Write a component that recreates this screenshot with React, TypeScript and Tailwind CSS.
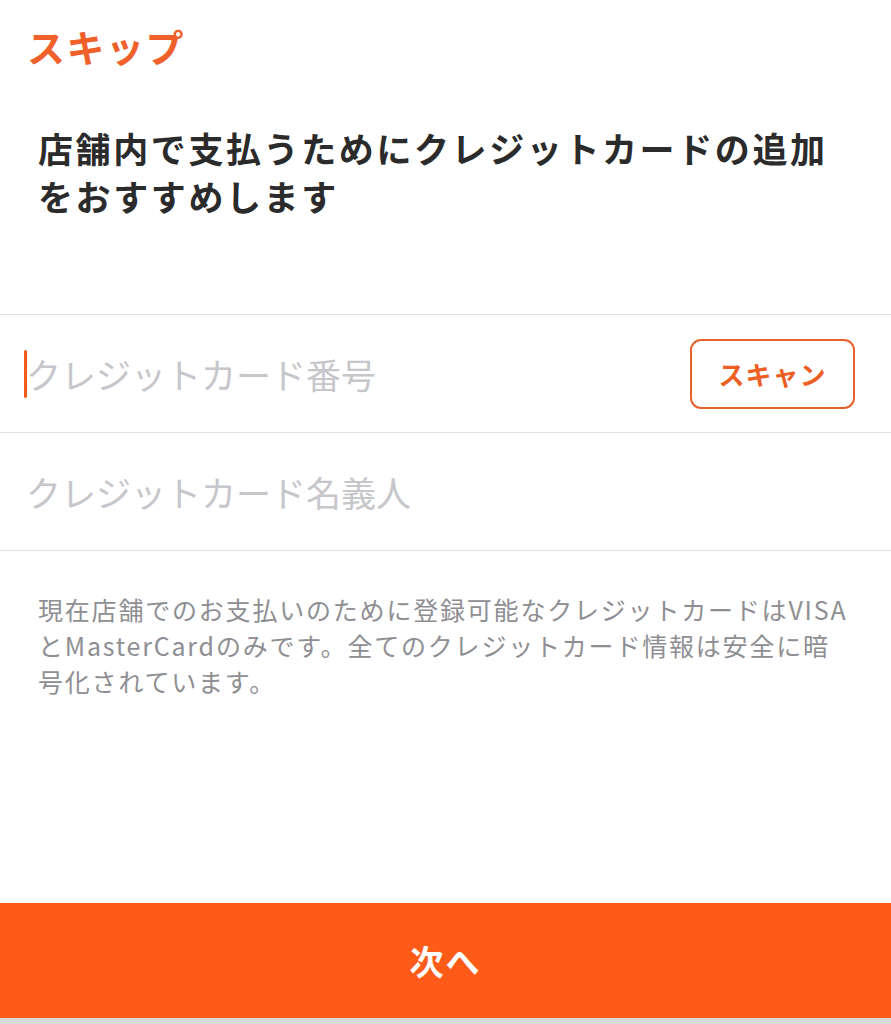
import { useState } from "react";

export default function App() {
  const [number, setNumber] = useState("");
  const [name, setName] = useState("");

  return (
    <div
      className="flex h-[1024px] w-[891px] flex-col bg-white"
      style={{ fontFamily: '"Noto Sans CJK JP", "Noto Sans", sans-serif' }}
    >
      <div className="pl-[27px] pt-[22px]">
        <button className="text-[38px] font-bold leading-[48px] tracking-[1.5px] text-[#f0602a]">スキップ</button>
      </div>

      <h1 className="mt-[54px] pl-[38px] pr-[40px] text-[35px] font-bold leading-[48px] tracking-[2.6px] text-[#2b2b2b]">
        店舗内で支払うためにクレジットカードの追加
        <br />
        をおすすめします
      </h1>

      <div className="mt-[94px] border-t border-[#e0e0e2]">
        <div className="flex h-[117px] items-center pr-[36px]">
          <div className="relative flex flex-1 items-center">
            <span className="absolute left-[24px] top-1/2 h-[48px] w-[3px] -translate-y-1/2 rounded-full bg-[#f85a1a]" />
            <input
              value={number}
              onChange={(e) => setNumber(e.target.value)}
              placeholder="クレジットカード番号"
              className="w-full bg-transparent pl-[26px] text-[35px] leading-[48px] text-[#2b2b2b] caret-transparent outline-none placeholder:text-[#c6c6cb]"
            />
          </div>
          <button className="flex h-[70px] w-[165px] items-center justify-center rounded-[11px] border-2 border-[#e8612c] text-[26px] font-bold tracking-[1px] text-[#ec5f25]">
            スキャン
          </button>
        </div>
        <div className="border-t border-[#e0e0e2]" />
        <div className="flex h-[117px] items-center">
          <input
            value={name}
            onChange={(e) => setName(e.target.value)}
            placeholder="クレジットカード名義人"
            className="w-full bg-transparent pl-[26px] text-[35px] leading-[48px] text-[#2b2b2b] outline-none placeholder:text-[#c6c6cb]"
          />
        </div>
        <div className="border-t border-[#e0e0e2]" />
      </div>

      <p className="mt-[40px] pl-[38px] pr-[40px] text-[25px] leading-[36px] tracking-[1.8px] text-[#8e8e93]">
        現在店舗でのお支払いのために登録可能なクレジットカードはVISAとMasterCardのみです。全てのクレジットカード情報は安全に暗号化されています。
      </p>

      <div className="mt-auto">
        <button className="flex h-[115px] w-full items-center justify-center bg-[#fe5b19] text-[34px] font-bold tracking-[2px] text-white">
          次へ
        </button>
        <div className="h-[6px] bg-[#d9d9d9]" />
      </div>
    </div>
  );
}
